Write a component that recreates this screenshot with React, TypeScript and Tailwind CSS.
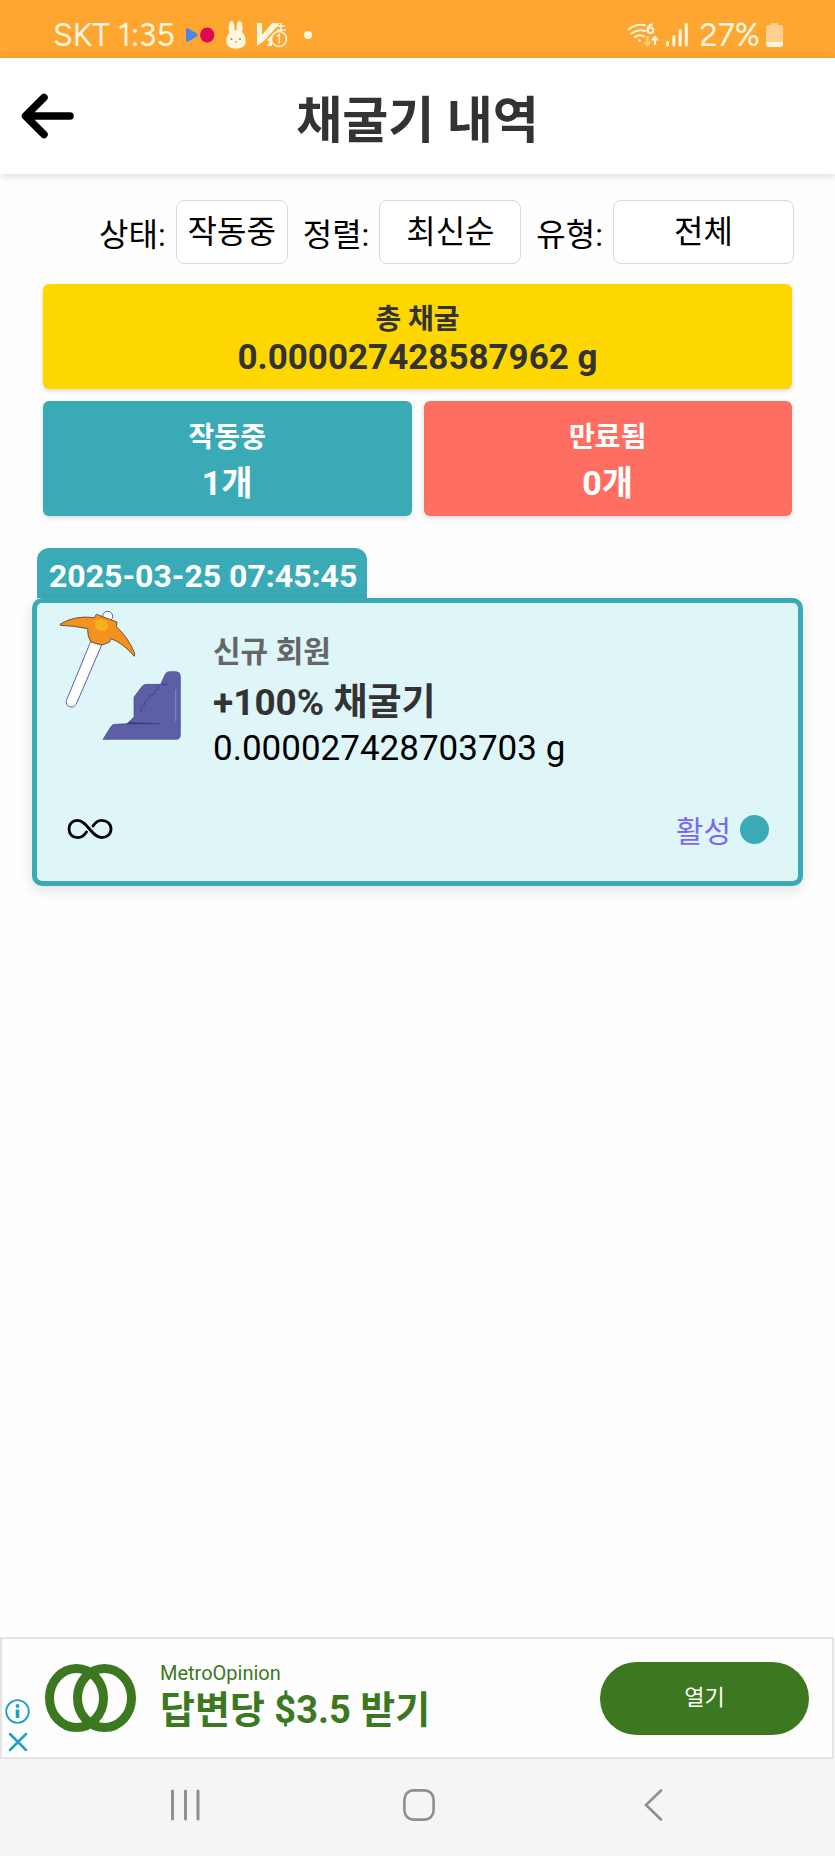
import React from "react";

function StatusBar() {
  return (
    <div className="flex h-[58px] items-center justify-between bg-[#ffa630] pl-[53px] pr-[52px] pt-[11px] text-[#fff6e0]">
      <div className="flex items-center">
        <span className="font-['Figtree','Lato',sans-serif] text-[32px] leading-9">SKT 1:35</span>
        <svg className="ml-[10px] h-4 w-[30px]" viewBox="0 0 30 16" aria-hidden="true">
          <path d="M1 2.5Q1 .5 3 1.3L12 6.6Q13.4 8 12 9.4L3 14.6Q1 15.4 1 13.5Z" fill="#4a86f0" />
          <ellipse cx="22.2" cy="8" rx="7.2" ry="7.4" fill="#dc0a55" />
        </svg>
        <svg className="ml-[11px] h-7 w-5" viewBox="0 0 20 28" aria-hidden="true">
          <g fill="#fff6e0">
            <ellipse cx="5.6" cy="6.6" rx="3" ry="6.6" />
            <ellipse cx="13.6" cy="6.6" rx="3" ry="6.6" />
            <path d="M10 9C16 9 19.6 14 19.6 20C19.6 25.5 16 27.5 10 27.5S.4 25.5 .4 20C.4 14 4 9 10 9Z" />
          </g>
          <g fill="#a58a55">
            <circle cx="5.5" cy="18" r="1" />
            <circle cx="14" cy="18" r="1" />
            <path d="M8.5 20.5h2.600l-1.300 1.400z" />
          </g>
        </svg>
        <svg className="ml-[10px] h-[26px] w-8" viewBox="0 0 32 26" aria-hidden="true">
          <path d="M1 1H6V13L16 1H24L9 18L1 24Z" fill="#fff6e0" />
          <path d="M11 18L16 13V24H10L14 20Z" fill="#fff6e0" />
          <path d="M20 4H29M25 1V8M21 8H30" stroke="#fff6e0" strokeWidth="1.5" fill="none" />
          <circle cx="23" cy="17" r="7.5" fill="#ffa630" stroke="#fff6e0" strokeWidth="1.5" />
          <path d="M20.8 14.2L23.3 12.6V21.5" stroke="#fff6e0" strokeWidth="1.5" fill="none" />
        </svg>
        <span className="ml-4 size-2 rounded-full bg-[#fff6e0]" />
      </div>
      <div className="flex items-center">
        <svg className="h-6 w-8" viewBox="0 0 32 24" fill="none" stroke="#fff6e0" strokeLinecap="round" strokeWidth="2" aria-hidden="true">
          <path d="M1.5 6.5Q9 .5 18 2.2M4.5 10.5Q11 5.5 18 8M8 14Q12 10.7 17 13.5" />
          <circle cx="12.5" cy="17.5" r=".8" fill="#fff6e0" strokeWidth="1" />
          <path d="M25 1.5Q20.5 2.5 20.5 7" />
          <circle cx="23.5" cy="7.2" r="2.8" />
          <path d="M20.5 14V22M18 19.5L20.5 22L23 19.5" opacity=".55" />
          <path d="M28 21V14.5M25.5 16.7L28 14L30.5 16.7" />
        </svg>
        <svg className="ml-[7px] h-6 w-6" viewBox="0 0 24 24" fill="#fff6e0" aria-hidden="true">
          <rect x="0" y="18" width="3" height="5.5" rx="1.5" />
          <rect x="6.3" y="12" width="3" height="11.5" rx="1.5" />
          <rect x="12.6" y="6" width="3" height="17.5" rx="1.5" />
          <rect x="18.8" y="0" width="3" height="23.5" rx="1.5" />
        </svg>
        <span className="ml-[10px] font-['Figtree','Lato',sans-serif] text-[32px] leading-9">27%</span>
        <svg className="ml-[6px] h-6 w-[17px]" viewBox="0 0 17 24" aria-hidden="true">
          <path d="M5 0H12V2H15Q17 2 17 4V19H0V4Q0 2 2 2H5Z" fill="#ffd092" />
          <path d="M0 19H17V21Q17 24 14 24H3Q0 24 0 21Z" fill="#fff6e0" />
        </svg>
      </div>
    </div>
  );
}

function Header() {
  return (
    <header className="relative flex h-[116px] items-center justify-center bg-white pt-[10px] shadow-[0_2px_8px_rgba(0,0,0,0.14)]">
      <button type="button" aria-label="뒤로" className="absolute left-5 top-[34px]">
        <svg className="h-12 w-[55px]" viewBox="0 0 55 48" fill="none" stroke="#000" strokeWidth="7.5" strokeLinecap="round" strokeLinejoin="round" aria-hidden="true">
          <path d="M50 24H6M24 5.5L5.5 24L24 42.5" />
        </svg>
      </button>
      <h1 className="text-[50px] font-bold leading-[60px] text-[#333]">채굴기 내역</h1>
    </header>
  );
}

function Filter({ id, label, options, width }: { id: string; label: string; options: string[]; width: string }) {
  return (
    <div className="flex items-center gap-[10px]">
      <label htmlFor={id} className="pt-[5px] text-[32px] leading-10">
        {label}
      </label>
      <select
        id={id}
        className={`${width} h-16 appearance-none rounded-lg border border-[#d9d9d9] bg-white text-center text-[32px] leading-10 text-black [text-align-last:center]`}
      >
        {options.map((o) => (
          <option key={o}>{o}</option>
        ))}
      </select>
    </div>
  );
}

function Pickaxe() {
  return (
    <svg className="h-[135px] w-[127px] shrink-0" viewBox="110 235 381 405" aria-hidden="true">
      <circle cx="262" cy="260" r="15" fill="#fff" stroke="#5d5ea6" strokeWidth="3" />
      <path d="M211 336L244 346L168 523Q160 535 150 532Q136 528 138 513Z" fill="#fff" stroke="#5d5ea6" strokeWidth="3" />
      <path
        d="M120 283Q165 256 222 264L228 254L290 277L288 291Q322 321 343 371L342 380Q308 340 272 327L267 338L244 346L211 336Q201 320 202 297Q160 288 120 287Z"
        fill="#f3921f"
        stroke="#6d5145"
        strokeWidth="3"
        strokeLinejoin="round"
      />
      <path d="M225 273L240 267L258 274L265 289L256 303L239 304L225 295Z" fill="#f5b21c" />
      <path
        d="M248 629L273 589Q277 584 284 584L320 582L341 562V502L366 469Q371 464 378 464H421L435 433Q439 426 447 426H468Q480 427 480 440V615Q480 629 467 629Z"
        fill="#5d5ea6"
        stroke="#46468f"
        strokeWidth="2"
      />
      <path d="M421 464H446M414 466V478L404 482V492L389 496L384 508L374 514L373 526L362 532V546" fill="none" stroke="#39397d" strokeWidth="2" />
      <path d="M318 583L330 578L420 583Z" fill="#39397d" stroke="#39397d" strokeWidth="1" />
      <path d="M466 480V574" stroke="#8585c4" strokeWidth="3" strokeLinecap="round" />
    </svg>
  );
}

function Stat({ label, value, color }: { label: string; value: string; color: string }) {
  return (
    <div className={`${color} flex flex-1 flex-col items-center rounded-md pb-[10px] pt-[15px] text-white shadow-[0_2px_5px_rgba(0,0,0,0.15)]`}>
      <span className="text-[28px] font-bold leading-[44px]">{label}</span>
      <span className="text-[34px] font-bold leading-[46px]">{value}</span>
    </div>
  );
}

function MinerCard() {
  return (
    <article className="mx-8 mt-8">
      <div className="ml-[5px] flex w-fit rounded-t-xl bg-[#3aabb6] pb-1 pl-3 pr-[10px] pt-[10px] text-[32px] font-bold leading-9 text-white">
        2025-03-25 07:45:45
      </div>
      <div className="h-[288px] rounded-[10px] border-5 border-[#3aabb6] bg-[#dff6f8] shadow-[0_4px_14px_rgba(0,0,0,0.12)]">
        <div className="flex gap-[29px] pl-5 pt-[5px]">
          <Pickaxe />
          <div className="flex flex-col pt-[19px]">
            <span className="text-[30px] font-bold leading-[50px] text-[#666]">신규 회원</span>
            <span className="text-[37px] font-bold leading-[52px] text-[#333]">+100% 채굴기</span>
            <span className="text-[35px] leading-10 text-black">0.000027428703703 g</span>
          </div>
        </div>
        <div className="flex items-center justify-between pl-[30px] pr-[29px] pt-[37px]">
          <svg className="h-[22px] w-[46px]" viewBox="0 0 46 22" fill="none" stroke="#000" strokeWidth="2.8" strokeLinecap="round" role="img" aria-label="무제한">
            <path d="M19.5 14C17 18 14 19.6 10.5 19.6C5.5 19.6 2 16 2 11S5.5 2.4 10.5 2.4C20 2.4 25 19.6 34.5 19.6C40 19.6 44 16 44 11S40 2.4 34.5 2.4C31 2.4 28.5 4.300 26 8" />
          </svg>
          <div className="flex items-center gap-[9px]">
            <span className="pt-[6px] text-[30px] leading-10 text-[#7b68ee]">활성</span>
            <span className="size-[29px] rounded-full bg-[#3aabb6]" />
          </div>
        </div>
      </div>
    </article>
  );
}

function AdBanner() {
  return (
    <aside className="mr-px flex h-[122px] items-center border-2 border-[#e4e4e4] bg-[#fefefe] pl-[3px] pr-[23px] text-[#3c781f]">
      <div className="flex flex-col items-center gap-2 self-end pb-[5px]">
        <button type="button" aria-label="광고 정보">
          <svg className="size-[25px]" viewBox="0 0 25 25" fill="none" stroke="#1ba3c0" aria-hidden="true">
            <circle cx="12.5" cy="12.5" r="11.3" strokeWidth="1.8" />
            <circle cx="12.5" cy="7" r="1.9" fill="#1ba3c0" stroke="none" />
            <path d="M12.5 10.500V19" strokeWidth="3.600" />
          </svg>
        </button>
        <button type="button" aria-label="광고 닫기">
          <svg className="size-5" viewBox="0 0 20 20" stroke="#1ba3c0" strokeWidth="2.5" strokeLinecap="round" aria-hidden="true">
            <path d="M2 2L18 18M18 2L2 18" />
          </svg>
        </button>
      </div>
      <svg className="ml-[15px] h-[68px] w-[91px]" viewBox="0 0 91 68" fill="none" stroke="#3c781f" strokeWidth="9" aria-hidden="true">
        <ellipse cx="31.5" cy="34" rx="27" ry="29.5" />
        <ellipse cx="59.5" cy="34" rx="27" ry="29.5" />
      </svg>
      <div className="ml-6 flex flex-1 flex-col">
        <span className="text-xl leading-6">MetroOpinion</span>
        <span className="text-[38px] font-bold leading-[50px]">답변당 $3.5 받기</span>
      </div>
      <button type="button" className="h-[73px] w-[209px] rounded-full bg-[#3c781f] pb-[2px] text-[22px] text-white">
        열기
      </button>
    </aside>
  );
}

function NavBar() {
  return (
    <nav className="grid h-[97px] grid-cols-3 items-center justify-items-center bg-[#f5f5f7] pb-[6px] pl-[68px] pr-[65px]">
      <button type="button" aria-label="최근 앱">
        <svg className="size-8" viewBox="0 0 32 32" stroke="#8f8f91" strokeWidth="3" strokeLinecap="round" aria-hidden="true">
          <path d="M3.5 2V30M16.5 2V30M29 2V30" />
        </svg>
      </button>
      <button type="button" aria-label="홈">
        <svg className="size-8" viewBox="0 0 32 32" fill="none" stroke="#8f8f91" strokeWidth="2.6" aria-hidden="true">
          <rect x="1.4" y="1.4" width="29.2" height="29.2" rx="9" />
        </svg>
      </button>
      <button type="button" aria-label="이전">
        <svg className="size-8" viewBox="0 0 32 32" fill="none" stroke="#8f8f91" strokeWidth="2.6" strokeLinecap="round" aria-hidden="true">
          <path d="M24 1.5L9 16L24 30.5" />
        </svg>
      </button>
    </nav>
  );
}

export default function App() {
  return (
    <div className="flex min-h-screen flex-col bg-[#fefefe] font-['Roboto','Noto_Sans_CJK_KR',sans-serif] text-black">
      <StatusBar />
      <Header />
      <main className="flex-1">
        <div className="flex justify-end gap-[15px] pr-[41px] pt-[26px]">
          <Filter id="state" label="상태:" options={["작동중", "만료됨"]} width="w-[112px]" />
          <Filter id="sort" label="정렬:" options={["최신순", "오래된순"]} width="w-[142px]" />
          <Filter id="kind" label="유형:" options={["전체"]} width="w-[181px]" />
        </div>
        <section className="mx-[43px] mt-5 flex flex-col gap-3">
          <div className="flex flex-col items-center rounded-md bg-[#ffd700] pb-3 pt-[17px] text-[#333] shadow-[0_2px_5px_rgba(0,0,0,0.15)]">
            <span className="text-[28px] font-bold leading-[38px]">총 채굴</span>
            <span className="text-[35px] font-bold leading-[38px]">0.000027428587962 g</span>
          </div>
          <div className="flex gap-3">
            <Stat label="작동중" value="1개" color="bg-[#3aabb6]" />
            <Stat label="만료됨" value="0개" color="bg-[#ff6f61]" />
          </div>
        </section>
        <MinerCard />
      </main>
      <AdBanner />
      <NavBar />
    </div>
  );
}
